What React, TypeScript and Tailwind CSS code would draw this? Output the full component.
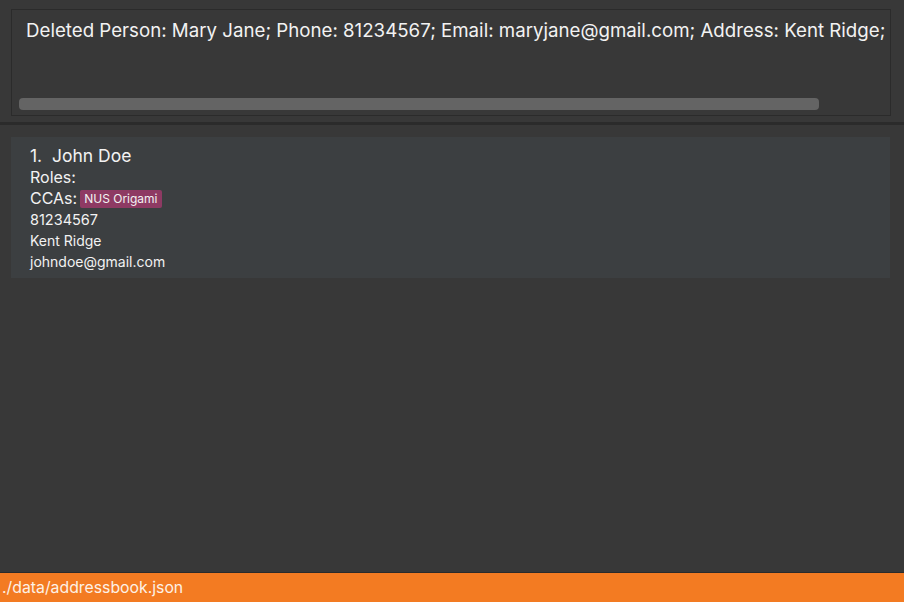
export default function App() {
  const font = { fontFamily: 'Inter, "Open Sans", "Liberation Sans", sans-serif' };

  return (
    <div className="flex h-[602px] w-[904px] flex-col bg-[#383838] text-white" style={font}>
      {/* result display */}
      <div className="h-[122px] pl-[11px] pr-[13px] pt-[9px]">
        <div className="flex h-[107px] flex-col overflow-hidden border border-[#2b2b2b] bg-[#383838]">
          <div className="whitespace-nowrap pl-[14px] pt-[8px] text-[18.7px] leading-[26px] text-[#f2f2f2]">
            Deleted Person: Mary Jane; Phone: 81234567; Email: maryjane@gmail.com; Address: Kent Ridge;
          </div>
          <div className="mt-auto mb-[5px] ml-[7px] h-[12px] w-[800px] rounded-[4px] bg-[#646464]" />
        </div>
      </div>

      <div className="h-[3px] bg-[#2b2b2b]" />

      {/* person list */}
      <div className="flex-1 px-[11px] pt-[12px]">
        <div className="h-[141px] w-[879px] bg-[#3c3f41] pl-[19px] pt-[8px] leading-none text-[#f2f2f2]">
          <div className="text-[17.5px] leading-[22px]">1.&nbsp; John Doe</div>
          <div className="text-[16px] leading-[21px]">Roles:</div>
          <div className="flex items-center gap-[3px] text-[16px] leading-[21px]">
            CCAs:
            <span className="rounded-[2px] bg-[#8e3a63] px-[4px] text-[12px] leading-[18px]">NUS Origami</span>
          </div>
          <div className="text-[14.5px] leading-[21px]">81234567</div>
          <div className="text-[14px] leading-[21px]">Kent Ridge</div>
          <div className="text-[14px] leading-[21px]">johndoe@gmail.com</div>
        </div>
      </div>

      {/* status bar */}
      <div className="h-[30px] border-t border-[#2b2b2b] bg-[#f37b22] pl-[2px] text-[15.8px] leading-[29px] text-[#fdf1e6]">
        ./data/addressbook.json
      </div>
    </div>
  );
}
